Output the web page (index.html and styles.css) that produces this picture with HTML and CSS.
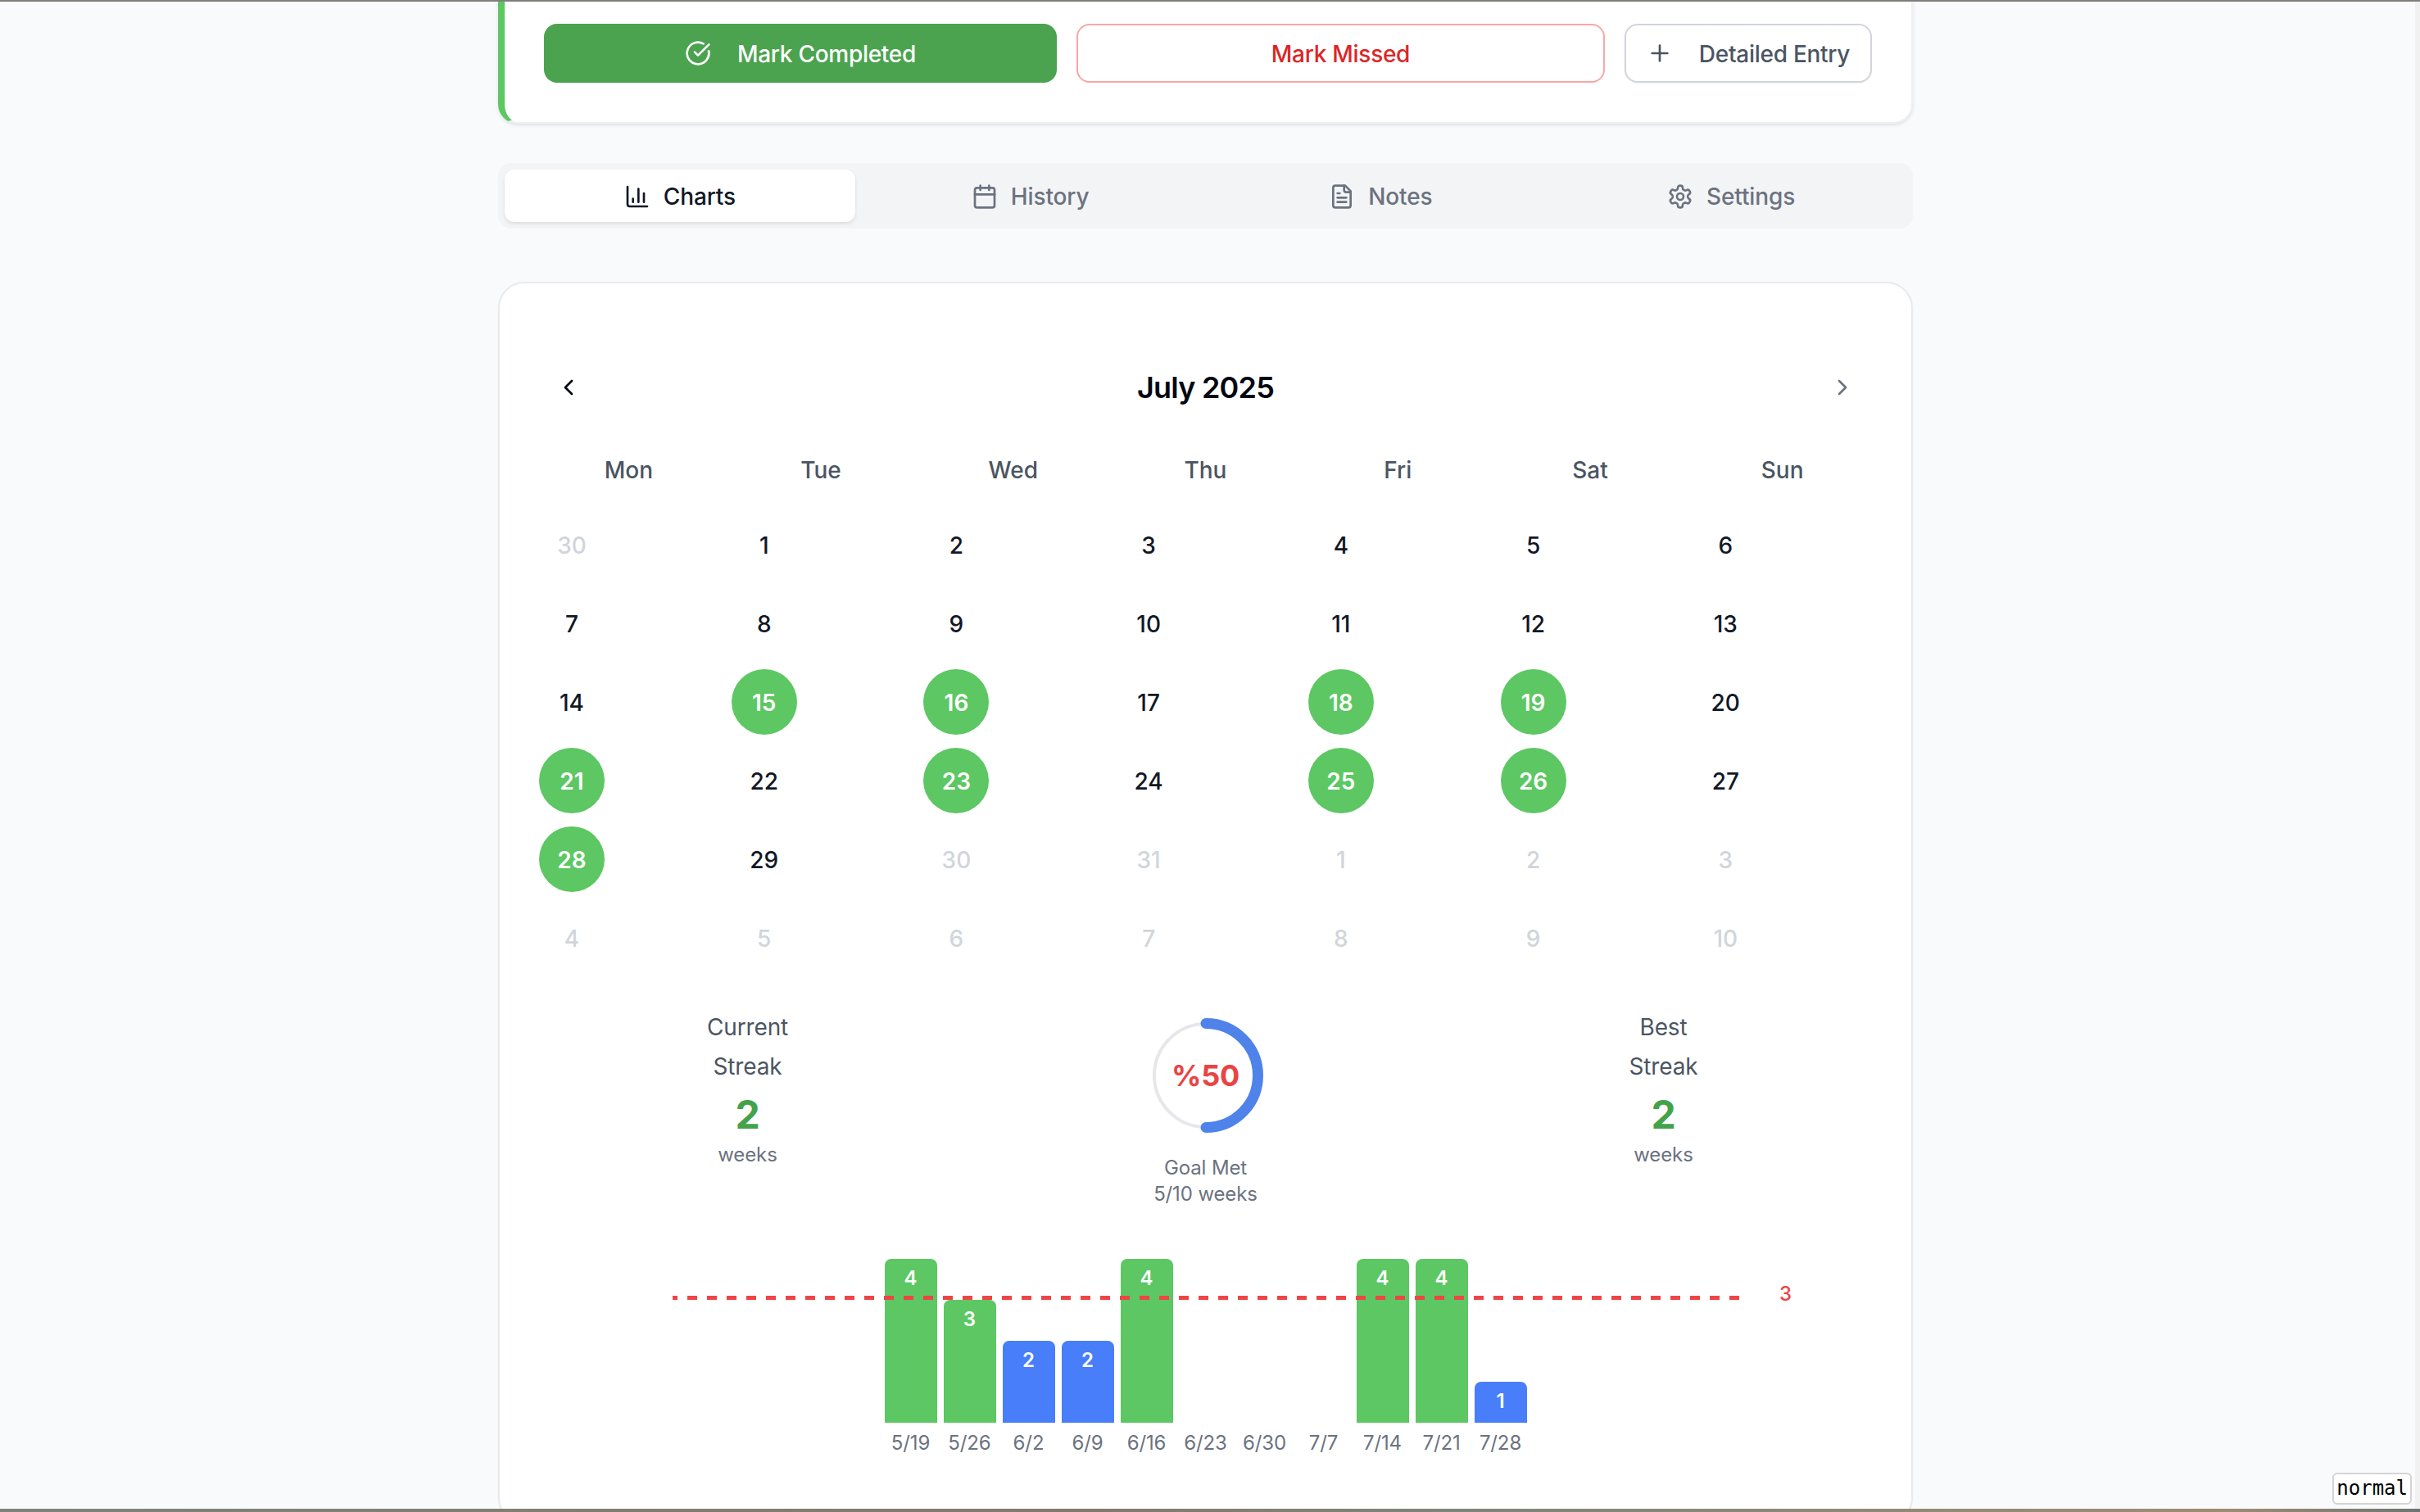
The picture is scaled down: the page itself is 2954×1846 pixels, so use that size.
FILE: index.html
```html
<!DOCTYPE html>
<html lang="en">
  <head>
    <meta charset="UTF-8" />
    <meta name="viewport" content="width=device-width, initial-scale=1.0" />
    <title>Habit Detail</title>
    <link rel="stylesheet" href="styles.css">
  </head>
  <body>
    <div class="edge-top"></div>
    <div class="viewport">
      <main class="page">
        <section class="action-card">
          <button class="btn btn-complete" type="button">
            <svg class="icon" viewBox="0 0 24 24"><path d="M21.801 10A10 10 0 1 1 17 3.335" /><path d="m9 11 3 3L22 4" /></svg>
            Mark Completed
          </button>
          <button class="btn btn-missed" type="button">Mark Missed</button>
          <button class="btn btn-detail" type="button">
            <svg class="icon" viewBox="0 0 24 24"><path d="M5 12h14" /><path d="M12 5v14" /></svg>
            Detailed Entry
          </button>
        </section>

        <nav class="tabs">
          <div class="tab active">
            <svg class="icon" viewBox="0 0 24 24"><path d="M3 3v16a2 2 0 0 0 2 2h16" /><path d="M18 17V9" /><path d="M13 17V5" /><path d="M8 17v-3" /></svg>
            Charts
          </div>
          <div class="tab">
            <svg class="icon" viewBox="0 0 24 24"><path d="M8 2v4" /><path d="M16 2v4" /><rect width="18" height="18" x="3" y="4" rx="2" /><path d="M3 10h18" /></svg>
            History
          </div>
          <div class="tab">
            <svg class="icon" viewBox="0 0 24 24"><path d="M15 2H6a2 2 0 0 0-2 2v16a2 2 0 0 0 2 2h12a2 2 0 0 0 2-2V7Z" /><path d="M14 2v4a2 2 0 0 0 2 2h4" /><path d="M10 9H8" /><path d="M16 13H8" /><path d="M16 17H8" /></svg>
            Notes
          </div>
          <div class="tab">
            <svg class="icon" viewBox="0 0 24 24"><path d="M12.22 2h-.44a2 2 0 0 0-2 2v.18a2 2 0 0 1-1 1.73l-.43.25a2 2 0 0 1-2 0l-.15-.08a2 2 0 0 0-2.73.73l-.22.38a2 2 0 0 0 .73 2.73l.15.1a2 2 0 0 1 1 1.72v.51a2 2 0 0 1-1 1.74l-.15.09a2 2 0 0 0-.73 2.73l.22.38a2 2 0 0 0 2.73.73l.15-.08a2 2 0 0 1 2 0l.43.25a2 2 0 0 1 1 1.73V20a2 2 0 0 0 2 2h.44a2 2 0 0 0 2-2v-.18a2 2 0 0 1 1-1.73l.43-.25a2 2 0 0 1 2 0l.15.08a2 2 0 0 0 2.73-.73l.22-.39a2 2 0 0 0-.73-2.73l-.15-.08a2 2 0 0 1-1-1.74v-.5a2 2 0 0 1 1-1.74l.15-.09a2 2 0 0 0 .73-2.73l-.22-.38a2 2 0 0 0-2.73-.73l-.15.08a2 2 0 0 1-2 0l-.43-.25a2 2 0 0 1-1-1.73V4a2 2 0 0 0-2-2z" /><circle cx="12" cy="12" r="3" /></svg>
            Settings
          </div>
        </nav>

        <section class="main-card">
          <div class="cal-head">
            <svg class="icon chevron-prev" viewBox="0 0 24 24"><path d="m15 18-6-6 6-6" /></svg>
            <h2 class="cal-title">July 2025</h2>
            <svg class="icon chevron-next" viewBox="0 0 24 24"><path d="m9 18 6-6-6-6" /></svg>
          </div>

          <div class="weekdays">
            <div>Mon</div><div>Tue</div><div>Wed</div><div>Thu</div><div>Fri</div><div>Sat</div><div>Sun</div>
          </div>

          <div class="days">
            <div class="day muted">30</div><div class="day">1</div><div class="day">2</div><div class="day">3</div><div class="day">4</div><div class="day">5</div><div class="day">6</div>
            <div class="day">7</div><div class="day">8</div><div class="day">9</div><div class="day">10</div><div class="day">11</div><div class="day">12</div><div class="day">13</div>
            <div class="day">14</div><div class="day done">15</div><div class="day done">16</div><div class="day">17</div><div class="day done">18</div><div class="day done">19</div><div class="day">20</div>
            <div class="day done">21</div><div class="day">22</div><div class="day done">23</div><div class="day">24</div><div class="day done">25</div><div class="day done">26</div><div class="day">27</div>
            <div class="day done">28</div><div class="day">29</div><div class="day muted">30</div><div class="day muted">31</div><div class="day muted">1</div><div class="day muted">2</div><div class="day muted">3</div>
            <div class="day muted">4</div><div class="day muted">5</div><div class="day muted">6</div><div class="day muted">7</div><div class="day muted">8</div><div class="day muted">9</div><div class="day muted">10</div>
          </div>

          <div class="stats">
            <div class="stat">
              <div class="stat-title">Current<br />Streak</div>
              <div class="stat-value">2</div>
              <div class="stat-unit">weeks</div>
            </div>
            <div class="stat">
              <div class="ring">
                <svg viewBox="0 0 144 144">
                  <circle class="ring-track" cx="72" cy="72" r="63" />
                  <path class="ring-fill" d="M72 8.5a63.5 63.5 0 0 1 0 127" />
                </svg>
                <span class="ring-label">%50</span>
              </div>
              <div class="ring-caption">Goal Met<br />5/10 weeks</div>
            </div>
            <div class="stat">
              <div class="stat-title">Best<br />Streak</div>
              <div class="stat-value">2</div>
              <div class="stat-unit">weeks</div>
            </div>
          </div>

          <div class="chart">
            <svg class="goal-line" viewBox="0 0 1302 5"><line x1="0" y1="2.5" x2="1302" y2="2.5" /></svg>
            <span class="goal-value">3</span>
            <div class="week"><div class="bar-slot"><div class="bar green" style="height: 200px">4</div></div><div class="week-label">5/19</div></div>
            <div class="week"><div class="bar-slot"><div class="bar green" style="height: 150px">3</div></div><div class="week-label">5/26</div></div>
            <div class="week"><div class="bar-slot"><div class="bar blue" style="height: 100px">2</div></div><div class="week-label">6/2</div></div>
            <div class="week"><div class="bar-slot"><div class="bar blue" style="height: 100px">2</div></div><div class="week-label">6/9</div></div>
            <div class="week"><div class="bar-slot"><div class="bar green" style="height: 200px">4</div></div><div class="week-label">6/16</div></div>
            <div class="week"><div class="bar-slot"></div><div class="week-label">6/23</div></div>
            <div class="week"><div class="bar-slot"></div><div class="week-label">6/30</div></div>
            <div class="week"><div class="bar-slot"></div><div class="week-label">7/7</div></div>
            <div class="week"><div class="bar-slot"><div class="bar green" style="height: 200px">4</div></div><div class="week-label">7/14</div></div>
            <div class="week"><div class="bar-slot"><div class="bar green" style="height: 200px">4</div></div><div class="week-label">7/21</div></div>
            <div class="week"><div class="bar-slot"><div class="bar blue" style="height: 50px">1</div></div><div class="week-label">7/28</div></div>
          </div>
        </section>
      </main>
      <div class="mode-badge">normal</div>
    </div>
    <div class="edge-bottom"></div>
  </body>
</html>
```

FILE: styles.css
```css
* {
  box-sizing: border-box;
}

html,
body {
  height: 100%;
}

body {
  margin: 0;
  height: 1846px;
  overflow: hidden;
  display: flex;
  flex-direction: column;
  background-color: #f9fafb;
  font-family: Inter, "Noto Sans", sans-serif;
  color: #111827;
}

.edge-top {
  height: 2px;
  background-color: #807f7b;
}

.edge-bottom {
  height: 4px;
  background: linear-gradient(90deg, #7f8378, #85796c 45%, #7f8578 60%, #a08c72 92%, #6f7570);
}

.viewport {
  position: relative;
  flex: 1;
  min-height: 0;
  overflow: hidden;
  padding-right: 5px;
  border-right: 6px solid #f1f1f2;
}

.page {
  width: 1727px;
  margin: -23px auto 0;
}

.icon {
  width: 32px;
  height: 32px;
  flex-shrink: 0;
  fill: none;
  stroke: currentColor;
  stroke-width: 2;
  stroke-linecap: round;
  stroke-linejoin: round;
}

/* action card */
.action-card {
  display: grid;
  grid-template-columns: 626px 645px 1fr;
  gap: 24px;
  padding: 48px;
  background-color: #fff;
  border: 2px solid #eef0f3;
  border-left: 8px solid #5cc763;
  border-radius: 24px;
  box-shadow: 0 2px 4px rgba(30, 50, 80, 0.12);
}

.btn {
  display: flex;
  align-items: center;
  justify-content: center;
  gap: 32px;
  height: 72px;
  padding: 1px 0 0;
  border-radius: 16px;
  font-family: inherit;
  font-size: 28px;
  font-weight: 500;
  letter-spacing: -0.01em;
  white-space: nowrap;
}

.btn .icon {
  margin-top: -1px;
}

.btn-complete {
  background-color: #4ba34f;
  border: none;
  color: #fff;
}

.btn-missed {
  background-color: #fff;
  border: 2px solid #fca5a5;
  color: #dc2626;
}

.btn-detail {
  background-color: #fff;
  border: 2px solid #d1d5db;
  color: #4b5563;
  box-shadow: 0 1px 2px rgba(0, 0, 0, 0.05);
}

/* tabs */
.tabs {
  display: grid;
  grid-template-columns: repeat(4, 1fr);
  height: 80px;
  margin-top: 48px;
  padding: 8px;
  background-color: #f3f4f6;
  border-radius: 16px;
}

.tab {
  display: flex;
  align-items: center;
  justify-content: center;
  gap: 16px;
  padding-top: 1px;
  border-radius: 12px;
  font-size: 28px;
  font-weight: 500;
  letter-spacing: -0.005em;
  color: #6b7280;
}

.tab.active {
  background-color: #fff;
  color: #111827;
  box-shadow: 0 2px 4px rgba(0, 0, 0, 0.1);
}

/* calendar */
.main-card {
  margin-top: 65px;
  padding: 91px 40px 80px;
  background-color: #fff;
  border: 2px solid #e8eaee;
  border-radius: 32px;
  box-shadow: 0 1px 2px rgba(0, 0, 0, 0.04);
}

.cal-head {
  display: flex;
  align-items: center;
  justify-content: space-between;
  height: 72px;
  padding: 0 28px;
}

.cal-title {
  margin: 0;
  font-size: 36px;
  font-weight: 600;
  letter-spacing: -0.022em;
  color: #030712;
}

.chevron-prev {
  color: #030712;
}

.chevron-next {
  color: #6b7280;
}

.weekdays {
  display: grid;
  grid-template-columns: repeat(7, 1fr);
  height: 56px;
  margin-top: 37px;
  text-align: center;
  font-size: 28px;
  font-weight: 500;
  line-height: 56px;
  color: #4b5563;
}

.days {
  display: grid;
  grid-template-columns: repeat(7, 1fr);
  row-gap: 16px;
  margin-top: 23px;
}

.day {
  display: flex;
  align-items: center;
  justify-content: center;
  width: 80px;
  height: 80px;
  margin-left: 8px;
  padding-top: 1px;
  border-radius: 50%;
  font-size: 28px;
  font-weight: 500;
}

.day.muted {
  color: #d1d5db;
}

.day.done {
  background-color: #5cc763;
  color: #fff;
  font-weight: 600;
}

/* streaks and goal */
.stats {
  display: grid;
  grid-template-columns: repeat(3, 200px);
  justify-content: center;
  column-gap: 359px;
  margin-top: 45px;
}

.stat {
  text-align: center;
}

.stat-title {
  font-size: 28px;
  line-height: 48px;
  letter-spacing: -0.005em;
  color: #4b5563;
}

.stat-value {
  margin-top: 5px;
  font-size: 48px;
  font-weight: 700;
  line-height: 60px;
  color: #43a34a;
}

.stat-unit {
  margin-top: 3px;
  font-size: 24px;
  line-height: 32px;
  letter-spacing: -0.005em;
  color: #6b7280;
}

.ring {
  position: relative;
  width: 144px;
  height: 144px;
  margin: 11px auto 0;
}

.ring svg {
  display: block;
  width: 144px;
  height: 144px;
}

.ring-track {
  fill: none;
  stroke: #e5e7eb;
  stroke-width: 4;
}

.ring-fill {
  fill: none;
  stroke: #4f83ea;
  stroke-width: 13;
  stroke-linecap: round;
}

.ring-label {
  position: absolute;
  inset: 0;
  display: flex;
  align-items: center;
  justify-content: center;
  font-size: 36px;
  font-weight: 700;
  letter-spacing: -0.01em;
  color: #e94444;
}

.ring-caption {
  margin-top: 25px;
  font-size: 24px;
  line-height: 32px;
  letter-spacing: -0.005em;
  color: #6b7280;
}

/* weekly chart */
.chart {
  position: relative;
  display: flex;
  justify-content: center;
  gap: 8px;
  width: 1302px;
  margin: 63px auto 0;
}

.goal-line {
  position: absolute;
  top: 45px;
  left: 0;
  width: 1302px;
  height: 5px;
}

.goal-line line {
  stroke: #ef4444;
  stroke-width: 5;
  stroke-dasharray: 12 12;
  stroke-dashoffset: 6;
}

.goal-value {
  position: absolute;
  top: 27px;
  left: 1349px;
  width: 20px;
  text-align: center;
  font-size: 24px;
  font-weight: 500;
  line-height: 32px;
  color: #ef4444;
}

.week {
  width: 64px;
}

.bar-slot {
  display: flex;
  align-items: flex-end;
  height: 200px;
}

.bar {
  width: 100%;
  padding-top: 8px;
  border-radius: 8px 8px 0 0;
  text-align: center;
  font-size: 24px;
  font-weight: 600;
  line-height: 32px;
  color: #fff;
}

.bar.green {
  background-color: #5cc763;
}

.bar.blue {
  background-color: #487ef9;
}

.week-label {
  margin-top: 9px;
  text-align: center;
  white-space: nowrap;
  font-size: 24px;
  line-height: 32px;
  letter-spacing: -0.005em;
  color: #6b7280;
}

.mode-badge {
  position: absolute;
  right: 4px;
  bottom: 5px;
  padding: 0 3px;
  background-color: #fff;
  border: 2px solid #d4d4d4;
  border-radius: 6px;
  font-family: "DejaVu Sans Mono", monospace;
  font-size: 24px;
  line-height: 35px;
  color: #000;
}
```
